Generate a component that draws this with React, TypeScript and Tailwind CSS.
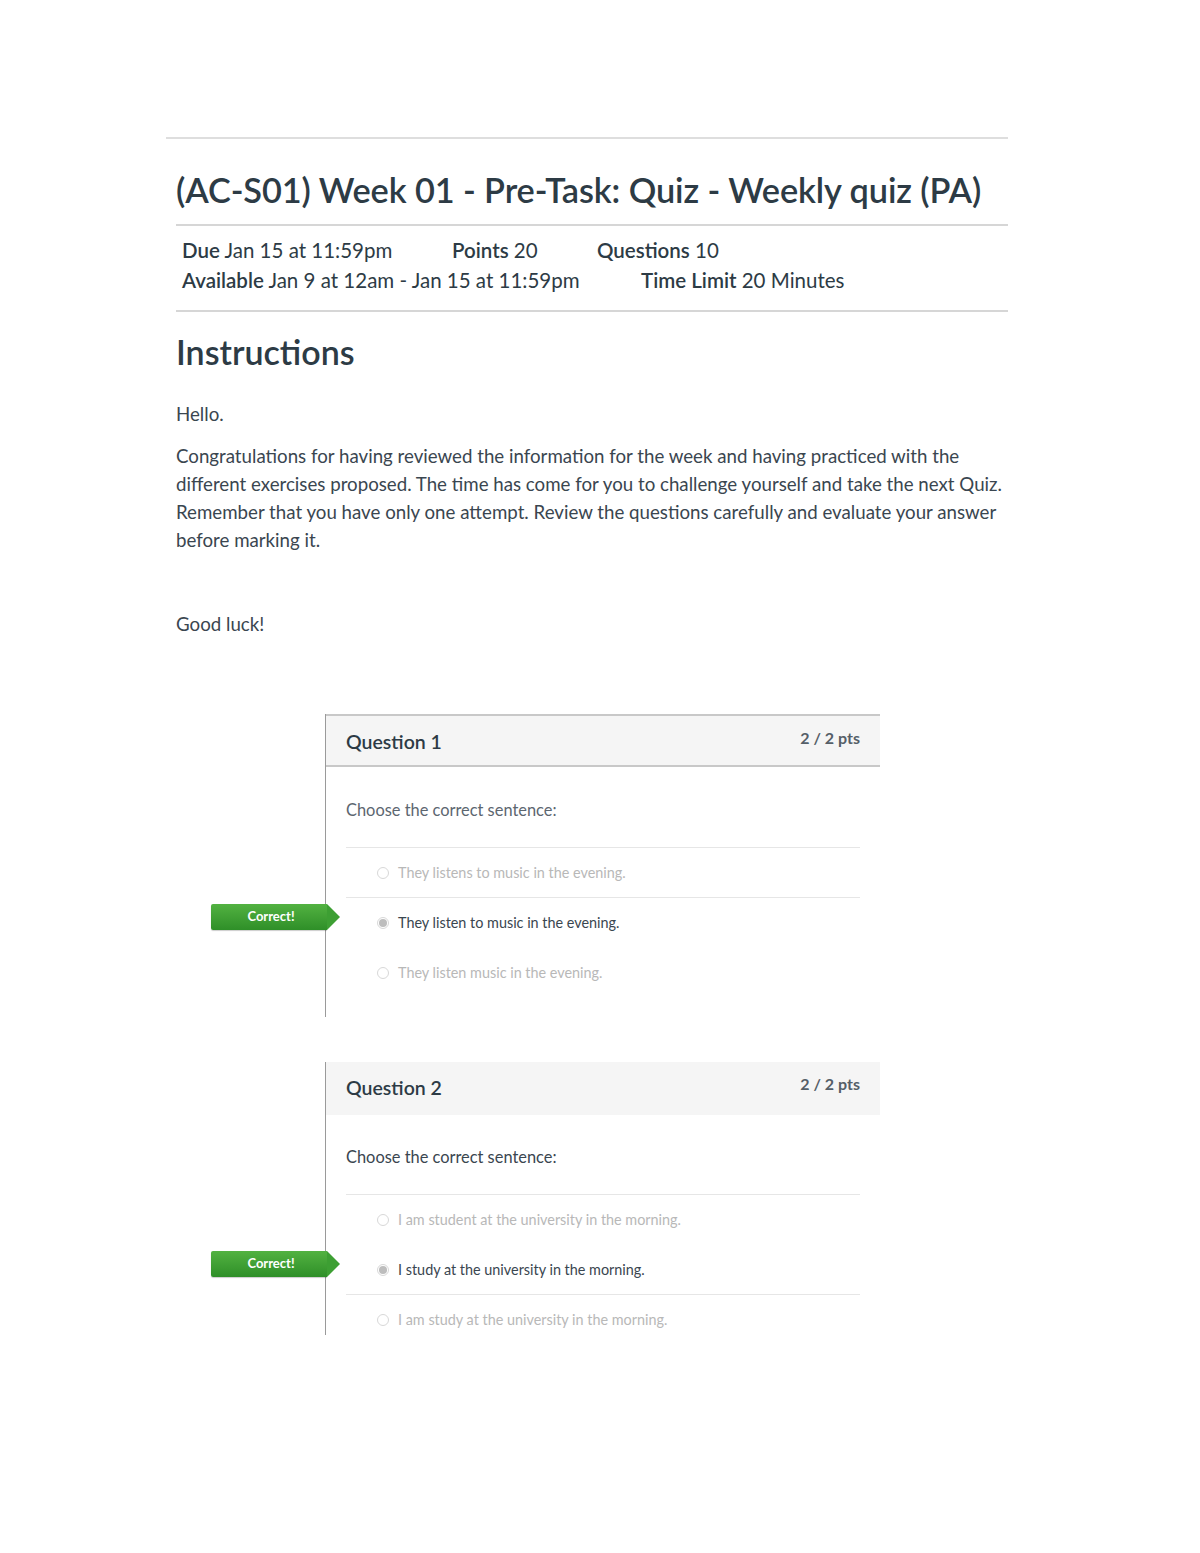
import React from 'react';

type Answer = { text: string; selected?: boolean; divider?: boolean };

const questions: {
  title: string;
  prompt: string;
  promptDark?: boolean;
  headerBorder?: boolean;
  answers: Answer[];
}[] = [
  {
    title: 'Question 1',
    prompt: 'Choose the correct sentence:',
    headerBorder: true,
    answers: [
      { text: 'They listens to music in the evening.', divider: true },
      { text: 'They listen to music in the evening.', selected: true },
      { text: 'They listen music in the evening.' },
    ],
  },
  {
    title: 'Question 2',
    prompt: 'Choose the correct sentence:',
    promptDark: true,
    answers: [
      { text: 'I am student at the university in the morning.' },
      { text: 'I study at the university in the morning.', selected: true, divider: true },
      { text: 'I am study at the university in the morning.' },
    ],
  },
];

function Radio({ selected }: { selected?: boolean }) {
  return (
    <span className="w-[12px] h-[12px] rounded-full border border-[#d8d8d8] bg-white flex items-center justify-center shrink-0">
      {selected && <span className="w-[8px] h-[8px] rounded-full bg-[#bdbdbd]" />}
    </span>
  );
}

function CorrectBadge() {
  return (
    <div className="absolute left-[-135px] top-[calc(50%-6px)] -translate-y-1/2 flex items-center">
      <div className="w-[116px] h-[26px] rounded-l-[2px] bg-gradient-to-b from-[#52b241] to-[#2e8f28] text-white text-[13px] font-bold flex items-center justify-center pl-[4px] shadow-[0_1px_1px_rgba(0,0,0,0.2)]">
        Correct!
      </div>
      <div className="w-0 h-0 border-y-[13px] border-y-transparent border-l-[13px] border-l-[#3d9f33]" />
    </div>
  );
}

export default function App() {
  return (
    <div className="min-h-[1553px] bg-white text-[#2d3b45]" style={{ fontFamily: 'Lato, "Open Sans", sans-serif' }}>
      <div className="pt-[137px] pl-[166px] w-[1008px]">
        <div className="border-t-2 border-[#dedede]" />
        <div className="pl-[10px]">
          <h1 className="mt-[31px] text-[34.3px] leading-[40px] font-semibold tracking-[-0.1px] text-[#2d3b45]">
            (AC-S01) Week 01 - Pre-Task: Quiz - Weekly quiz (PA)
          </h1>
          <div className="mt-[14px] border-t-2 border-[#d6d6d6]" />
          <div className="pl-[6px] pt-[9px] pb-[15px] text-[20.5px] leading-[30px] text-[#2d3b45]">
            <div className="flex">
              <span className="w-[270px]"><b className="font-semibold">Due</b> Jan 15 at 11:59pm</span>
              <span className="w-[145px]"><b className="font-semibold">Points</b> 20</span>
              <span><b className="font-semibold">Questions</b> 10</span>
            </div>
            <div className="flex">
              <span className="w-[459px]"><b className="font-semibold">Available</b> Jan 9 at 12am - Jan 15 at 11:59pm</span>
              <span><b className="font-semibold">Time Limit</b> 20 Minutes</span>
            </div>
          </div>
          <div className="border-t-2 border-[#d6d6d6]" />

          <h2 className="mt-[20px] text-[34px] leading-[40px] font-semibold text-[#2d3b45]">Instructions</h2>
          <div className="mt-[28px] text-[18.7px] text-[#3a4650]">
            <p className="leading-[28px]">Hello.</p>
            <p className="mt-[14px] leading-[28px]">
              Congratulations for having reviewed the information for the week and having practiced with the different
              exercises proposed. The time has come for you to challenge yourself and take the next Quiz. Remember that
              you have only one attempt. Review the questions carefully and evaluate your answer before marking it.
            </p>
            <p className="mt-[56px] leading-[28px]">Good luck!</p>
          </div>
        </div>
      </div>

      <div className="ml-[325px] w-[555px] mt-[76px] flex flex-col gap-[45px]">
        {questions.map((q, qi) => (
          <div key={q.title} className="border-l border-[#9a9a9a] relative">
            <div
              className={`h-[53px] bg-[#f5f5f5] flex items-start justify-between px-[20px] ${
                q.headerBorder ? 'border-t-2 border-b-2 border-[#c8c8c8]' : ''
              }`}
            >
              <span className="text-[19.5px] font-semibold mt-[11px] text-[#2d3b45]">{q.title}</span>
              <span className="text-[16px] font-bold mt-[10px] text-[#555f68]">2 / 2 pts</span>
            </div>
            <div className={`px-[20px] ${qi === 0 ? 'pt-[32px] pb-[19px]' : 'pt-[31px] pb-0'}`}>
              <p className={`text-[16.4px] leading-[22px] ${q.promptDark ? 'text-[#3a4650]' : 'text-[#5c6670]'}`}>
                {q.prompt}
              </p>
              <div className="mt-[26px] border-t border-[#e6e6e6]">
                {q.answers.map((a, ai) => (
                  <div
                    key={a.text}
                    className={`relative h-[50px] flex items-center pl-[31px] ${a.divider ? 'border-b border-[#e6e6e6]' : ''} ${
                      qi === 1 && ai === q.answers.length - 1 ? 'mb-[-10px]' : ''
                    }`}
                  >
                    <Radio selected={a.selected} />
                    <span className={`ml-[9px] text-[14.4px] ${a.selected ? 'text-[#3a4650]' : 'text-[#b8b8b8]'}`}>
                      {a.text}
                    </span>
                    {a.selected && <CorrectBadge />}
                  </div>
                ))}
              </div>
            </div>
          </div>
        ))}
      </div>
    </div>
  );
}
